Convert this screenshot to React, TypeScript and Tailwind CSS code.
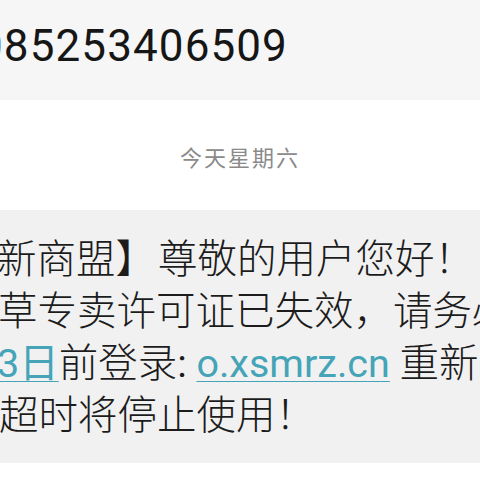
export default function App() {
  const font = { fontFamily: 'Roboto, "Noto Sans CJK SC", sans-serif' };

  return (
    <div className="h-[480px] w-[480px] overflow-hidden bg-white" style={font}>
      {/* sender number */}
      <div className="flex h-[100px] items-center bg-[#f6f6f6] pb-[8px]">
        <span className="ml-[-22px] whitespace-nowrap text-[44px] leading-none tracking-[1.1px] text-[#161616]">
          085253406509
        </span>
      </div>

      {/* day divider */}
      <div className="flex h-[110px] items-center justify-center pt-[6px]">
        <span className="text-[22px] tracking-[2px] text-[#8a8a8a]">今天星期六</span>
      </div>

      {/* message bubble */}
      <div className="h-[253px] bg-[#f1f1f1] pt-[24px] text-[39.5px] font-light leading-[52px] text-[#1c1c1c]">
        <p className="ml-[-3px] whitespace-nowrap">
          新商盟】<span className="ml-[3px]">尊敬的用户您好！</span>
        </p>
        <p className="ml-[-2px] whitespace-nowrap">草专卖许可证已失效，请务必</p>
        <p className="ml-[-3px] whitespace-nowrap">
          <span className="font-normal text-[#45a4b7] underline decoration-1 underline-offset-4">3日</span>
          前登录<span className="font-normal">:</span>{' '}
          <span className="font-normal text-[#45a4b7] underline decoration-1 underline-offset-4">o.xsmrz.cn</span>{' '}
          重新
        </p>
        <p className="ml-[-1px] whitespace-nowrap">超时将停止使用！</p>
      </div>
    </div>
  );
}
